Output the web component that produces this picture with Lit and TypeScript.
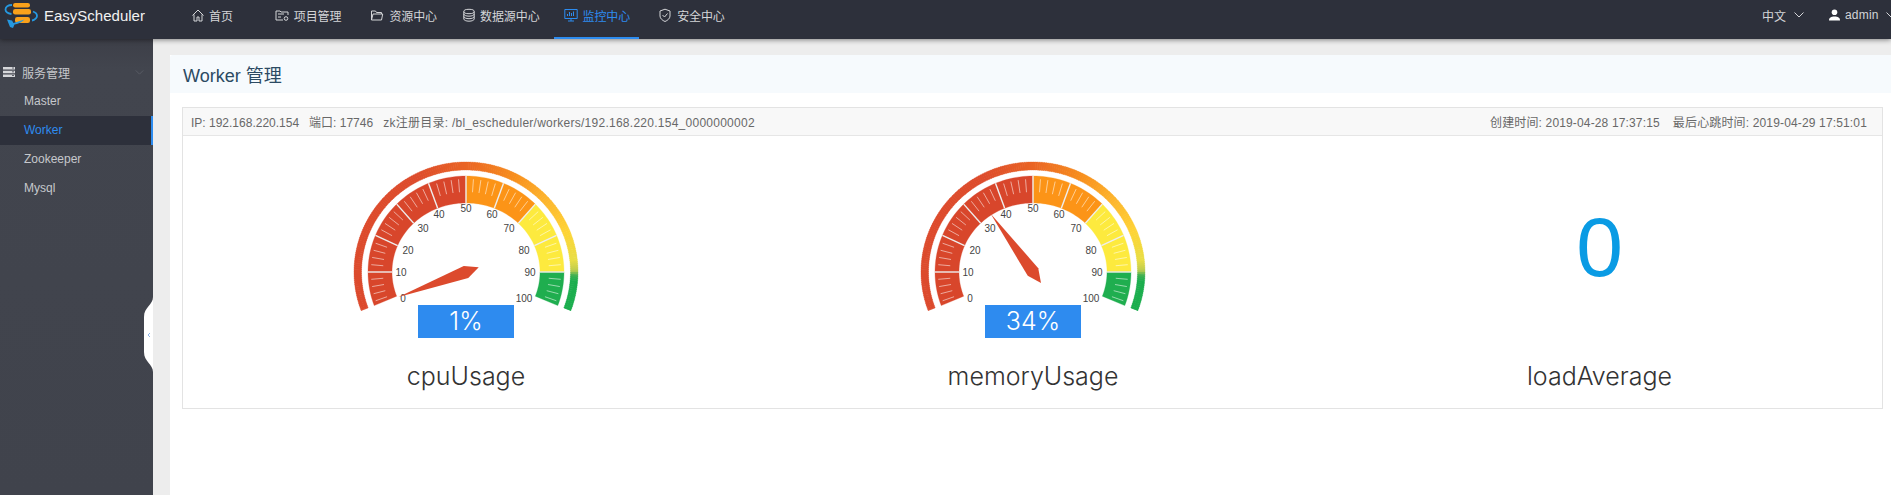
import { LitElement, html, svg, css } from 'lit';
import { customElement } from 'lit/decorators.js';

const CX = 120;
const CY = 111;

// polar point on a slightly squashed circle, angle in degrees (0 = right, 90 = up)
const pt = (rx: number, ry: number, deg: number) => {
  const a = (deg * Math.PI) / 180;
  return `${(CX + rx * Math.cos(a)).toFixed(2)},${(CY - ry * Math.sin(a)).toFixed(2)}`;
};

const sector = (from: number, to: number, inner: number[], outer: number[], fill: string) => {
  const pts: string[] = [];
  const n = Math.max(2, Math.ceil(Math.abs(from - to) / 2));
  for (let i = 0; i <= n; i++) pts.push(pt(outer[0], outer[1], from + ((to - from) * i) / n));
  for (let i = n; i >= 0; i--) pts.push(pt(inner[0], inner[1], from + ((to - from) * i) / n));
  return svg`<polygon points=${pts.join(' ')} fill=${fill} stroke=${fill} stroke-width="0.3"></polygon>`;
};

const RING_STOPS: [number, number[]][] = [
  [0, [220, 74, 45]],
  [38, [221, 76, 44]],
  [50, [234, 101, 36]],
  [62, [248, 145, 30]],
  [70, [253, 178, 44]],
  [80, [254, 212, 54]],
  [87, [232, 222, 70]],
  [89.4, [190, 205, 80]],
  [90.6, [60, 175, 80]],
  [92, [28, 174, 78]],
  [100, [28, 174, 78]],
];

const ringColor = (v: number) => {
  for (let i = 1; i < RING_STOPS.length; i++) {
    const [a, ca] = RING_STOPS[i - 1];
    const [b, cb] = RING_STOPS[i];
    if (v <= b) {
      const t = (v - a) / (b - a);
      return `rgb(${ca.map((c, k) => Math.round(c + (cb[k] - c) * t)).join(',')})`;
    }
  }
  return 'rgb(28,174,78)';
};

const valAngle = (v: number) => 202.5 - v * 2.25;

const LABELS: [string, number, number][] = [
  ['0', -63, 26], ['10', -65, 0], ['20', -58, -22], ['30', -43, -44], ['40', -27, -58], ['50', 0, -64],
  ['60', 26, -58], ['70', 43, -44], ['80', 58, -22], ['90', 64, 0], ['100', 58, 26],
];

const BANDS: [number, number, string][] = [
  [0, 50, '#d8462b'],
  [50, 70, '#fc9417'],
  [70, 90, '#fdea3e'],
  [90, 100, '#1fae4f'],
];

const IN = [74, 69];
const OUT = [98, 96];

const clampA = (a: number) => Math.max(-20.5, Math.min(200.5, a));

const gauge = (value: number) => {
  const ring = [];
  for (let v = 0; v < 100; v += 0.5) {
    ring.push(sector(clampA(valAngle(v)), clampA(valAngle(v + 0.6)), [104.5, 102], [112, 110], ringColor(v)));
  }
  const ticks = [];
  for (let v = 2; v < 100; v += 2) {
    const a = valAngle(v);
    if (v % 10 === 0) {
      const [x1, y1] = pt(IN[0], IN[1], a).split(',');
      const [x2, y2] = pt(OUT[0], OUT[1], a).split(',');
      ticks.push(svg`<line x1=${x1} y1=${y1} x2=${x2} y2=${y2} stroke="#eee" stroke-width="1.4"></line>`);
    } else {
      const [x1, y1] = pt(83, 80, a).split(',');
      const [x2, y2] = pt(95, 93, a).split(',');
      ticks.push(svg`<line x1=${x1} y1=${y1} x2=${x2} y2=${y2} stroke="#fff" stroke-opacity="0.6" stroke-width="0.9"></line>`);
    }
  }
  return svg`<svg class="dial" width="240" height="160" viewBox="0 0 240 160">
    ${ring}
    ${BANDS.map(([a, b, c]) => sector(clampA(valAngle(a)), clampA(valAngle(b)), IN, OUT, c))}
    ${ticks}
    ${LABELS.map(([t, dx, dy]) => svg`<text class="scale" x=${CX + dx} y=${CY + dy + 3.5} text-anchor="middle">${t}</text>`)}
    <polygon transform="translate(${CX} ${CY}) rotate(${-valAngle(value)})" points="72,0 0,-6.5 -13.6,0 0,6.5" fill="#dc4a2d"></polygon>
  </svg>`;
};

const I = {
  home: svg`<path d="M1.5 7.5 7 2l5.5 5.5M3 6.5V13h3V9h2v4h3V6.5" fill="none" stroke="currentColor" stroke-width="1"></path>`,
  proj: svg`<path d="M1 3h4l1 1h7v3M1 3v9h7M3 6h6M3 9h3" fill="none" stroke="currentColor" stroke-width="1"></path><circle cx="11" cy="10.5" r="1.8" fill="none" stroke="currentColor"></circle>`,
  folder: svg`<path d="M1.5 12V3h4l1 1.5h5V6M1.5 12h10l1.2-6H3z" fill="none" stroke="currentColor" stroke-width="1"></path>`,
  db: svg`<ellipse cx="7" cy="3.5" rx="5.2" ry="2.2" fill="none" stroke="currentColor"></ellipse><path d="M1.8 3.5v7.5c0 1.2 2.3 2.2 5.2 2.2s5.2-1 5.2-2.2V3.5M1.8 6c0 1.2 2.3 2.2 5.2 2.2S12.2 7.2 12.2 6M1.8 8.5c0 1.2 2.3 2.2 5.2 2.2s5.2-1 5.2-2.2" fill="none" stroke="currentColor"></path>`,
  monitor: svg`<path d="M.8 1.500h12.400v9H.8zM4 13h6M7 10.500V13M3.500 8V6M5.500 8V4M7.500 8V5M9.500 8V3.500" fill="none" stroke="currentColor" stroke-width="1"></path>`,
  shield: svg`<path d="M7 1.200 12 3v5c0 2.500-2.500 4.500-5 5.500C4.500 12.500 2 10.500 2 8V3zM4.500 7l2 2 3-3.500" fill="none" stroke="currentColor" stroke-width="1"></path>`,
};

// gap = space before the item, text = gap between icon and label
const NAV = [
  { label: '首页', icon: I.home, gap: 0, text: 4 },
  { label: '项目管理', icon: I.proj, gap: 23, text: 5 },
  { label: '资源中心', icon: I.folder, gap: 10, text: 5 },
  { label: '数据源中心', icon: I.db, gap: 6, text: 4 },
  { label: '监控中心', icon: I.monitor, gap: 5, text: 5 },
  { label: '安全中心', icon: I.shield, gap: 9, text: 5 },
];
const ACTIVE = '监控中心';

@customElement('app-root')
export class AppRoot extends LitElement {
  static styles = css`
    :host {
      display: block;
      width: 1891px;
      height: 495px;
      overflow: hidden;
      position: relative;
      background: #fff;
      font-family: "Liberation Sans", "Noto Sans CJK SC", sans-serif;
      font-size: 12px;
    }
    .head {
      height: 39px;
      background: #2d303b;
      display: flex;
      position: relative;
      z-index: 2;
      box-shadow: 0 1px 5px rgba(0, 0, 0, 0.45);
      color: #d4d5d8;
    }
    .logo {
      display: flex;
      align-items: center;
      width: 181px;
      padding: 0 0 8px 4px;
      box-sizing: border-box;
      gap: 5px;
      color: #f2f2f2;
      font-size: 15px;
      flex: none;
    }
    .nav { display: flex; height: 39px; }
    .nav-item {
      display: flex;
      align-items: center;
      height: 39px;
      padding: 0 9px 7px 10px;
      box-sizing: border-box;
      border-bottom: 2px solid transparent;
    }
    .nav-item svg { width: 14px; height: 14px; flex: none; }
    .nav-item span { white-space: nowrap; letter-spacing: -0.1px; }
    .nav-item.on { color: #2d8cf0; border-bottom-color: #2d8cf0; }
    .right {
      margin-left: auto;
      display: flex;
      align-items: center;
      height: 30px;
      font-size: 12px;
    }
    .lang { display: flex; align-items: center; gap: 8px; margin-right: 25px; }
    .user { display: flex; align-items: center; width: 62px; gap: 5px; overflow: hidden; }
    .user span { letter-spacing: 0.2px; }
    .chev { flex: none; margin-left: 2px; }
    .user-ic { flex: none; }
    .body { display: flex; height: 456px; }
    .side {
      width: 153px;
      flex: none;
      background: linear-gradient(#3d3f48 0, #42454e 30px, #40434c 100%);
      color: #c6c8cc;
      position: relative;
      padding-top: 19px;
      box-sizing: border-box;
    }
    .group {
      display: flex;
      align-items: center;
      height: 28px;
      padding-left: 3px;
      gap: 7px;
      margin-bottom: 1px;
    }
    .group .down { margin-left: auto; margin-right: 9px; }
    .row {
      height: 29px;
      line-height: 29px;
      padding-left: 24px;
      box-sizing: border-box;
    }
    .row.on {
      background: #2d303b;
      color: #2d8cf0;
      border-right: 2px solid #2d8cf0;
      font-weight: 500;
    }
    .bump {
      position: absolute;
      left: 144px;
      top: 258px;
      width: 9px;
      height: 75px;
    }
    .main {
      flex: 1;
      min-width: 0;
      background: #ededed;
      padding: 16px 0 0 17px;
      display: flex;
      flex-direction: column;
    }
    .sheet { flex: 1; background: #fff; }
    .title {
      height: 38px;
      background: #f6fafd;
      border-radius: 3px 0 0 0;
      padding-left: 13px;
      font-size: 18px;
      color: #2c4a63;
      line-height: 42px;
    }
    .panel {
      margin: 14px 8px 0 12px;
      height: 302px;
      border: 1px solid #e3e3e3;
      box-sizing: border-box;
    }
    .panel-head {
      height: 28px;
      background: #f8f8f8;
      border-bottom: 1px solid #e6e6e6;
      display: flex;
      align-items: center;
      justify-content: space-between;
      padding: 0 15px 0 8px;
      color: #686868;
      box-sizing: border-box;
    }
    .panel-head .cell { margin-right: 10px; }
    .panel-head .path { letter-spacing: 0.26px; margin-right: 0; }
    .panel-head .r .cell { margin: 0 0 0 13px; letter-spacing: 0.15px; }
    .cols { display: grid; grid-template-columns: 566px 568px 1fr; }
    .col { display: flex; flex-direction: column; align-items: center; padding-top: 25px; }
    .dial { display: block; }
    .scale { font-size: 10px; fill: #444; font-family: "Liberation Sans", sans-serif; }
    .pct {
      width: 96px;
      height: 33px;
      margin-top: -16px;
      background: #2e8bef;
      color: #fff;
      font: 300 25px/33px Inter, sans-serif;
      text-align: center;
    }
    .name {
      margin-top: 21px;
      font: 300 25px/34px Inter, sans-serif;
      color: #333;
    }
    .big {
      height: 172px;
      font: 400 84px/172px "Liberation Sans", sans-serif;
      color: #0a9be4;
      margin-bottom: 26px;
    }
    .big + .name { margin-top: 0; }
  `;

  render() {
    return html`
      <div class="head">
        <div class="logo">
          <svg width="35" height="30" viewBox="4 1 35 30">
            <rect x="13" y="3" width="17" height="4.500" rx="2.200" fill="#f9a11b"></rect>
            <rect x="13" y="9" width="18" height="5.500" rx="2.200" fill="#f9a11b"></rect>
            <rect x="15" y="17" width="15" height="6" rx="2.200" fill="#f9a11b"></rect>
            <path d="M12 5C8 5 5.500 7 5.500 9.500s2.500 4 6 4.500M33 11.500c3 1 4 3 4 4.500s-2 4-5 4.500" fill="none" stroke="#2598e0" stroke-width="1.800"></path>
            <path d="M7 19.500l5 1 1.500 2.500 11-3.500c-3 3-7 4.500-10 5l-1.500 3.500-3-1z" fill="#2598e0"></path>
          </svg>
          <span>EasyScheduler</span>
        </div>
        <div class="nav">
          ${NAV.map(n => html`<div class="nav-item ${n.label === ACTIVE ? 'on' : ''}" style="margin-left:${n.gap}px">
            <svg viewBox="0 0 14 14">${n.icon}</svg>
            <span style="margin-left:${n.text}px">${n.label}</span>
          </div>`)}
        </div>
        <div class="right">
          <div class="lang">
            <span>中文</span>
            <svg width="10" height="6" viewBox="0 0 10 6"><path d="M.5.500 5 5 9.500.500" fill="none" stroke="currentColor"></path></svg>
          </div>
          <div class="user">
            <svg class="user-ic" width="11" height="12" viewBox="0 0 11 12"><circle cx="5.500" cy="3.200" r="2.800" fill="#fff"></circle><path d="M0 11.500c0-3 2-4 5.500-4s5.500 1 5.500 4z" fill="#fff"></path></svg>
            <span>admin</span>
            <svg class="chev" width="10" height="6" viewBox="0 0 10 6"><path d="M.5.500 5 5 9.500.500" fill="none" stroke="currentColor"></path></svg>
          </div>
        </div>
      </div>
      <div class="body">
        <div class="side">
          <div class="group">
            <svg width="12" height="10" viewBox="0 0 12 10">
              <path d="M0 0h12v2.600H0zM0 3.700h12v2.600H0zM0 7.400h12V10H0z" fill="#d6d7da"></path>
              <path d="M9 1h2M9 4.800h2M9 8.500h2" stroke="#40434c" stroke-width="0.8"></path>
            </svg>
            <span>服务管理</span>
            <svg class="down" width="9" height="5" viewBox="0 0 10 6"><path d="M.5.500 5 5 9.500.500" fill="none" stroke="#5d6069"></path></svg>
          </div>
          <div class="row">Master</div>
          <div class="row on">Worker</div>
          <div class="row">Zookeeper</div>
          <div class="row">Mysql</div>
          <svg class="bump" viewBox="0 0 9 75"><path d="M9 0C9 8 0 10 0 20v35c0 10 9 12 9 20z" fill="#fff"></path><path d="M6 36l-2 2 2 2" fill="none" stroke="#8db4e8" stroke-width="1"></path></svg>
        </div>
        <div class="main">
          <div class="sheet">
            <div class="title">Worker 管理</div>
            <div class="panel">
              <div class="panel-head">
                <div>
                  <span class="cell">IP: 192.168.220.154</span><span class="cell">端口: 17746</span><span class="cell path">zk注册目录: /bl_escheduler/workers/192.168.220.154_0000000002</span>
                </div>
                <div class="r">
                  <span class="cell">创建时间: 2019-04-28 17:37:15</span><span class="cell">最后心跳时间: 2019-04-29 17:51:01</span>
                </div>
              </div>
              <div class="cols">
                <div class="col">${gauge(1)}<div class="pct">1%</div><div class="name">cpuUsage</div></div>
                <div class="col">${gauge(34)}<div class="pct">34%</div><div class="name">memoryUsage</div></div>
                <div class="col"><div class="big">0</div><div class="name">loadAverage</div></div>
              </div>
            </div>
          </div>
        </div>
      </div>
    `;
  }
}
